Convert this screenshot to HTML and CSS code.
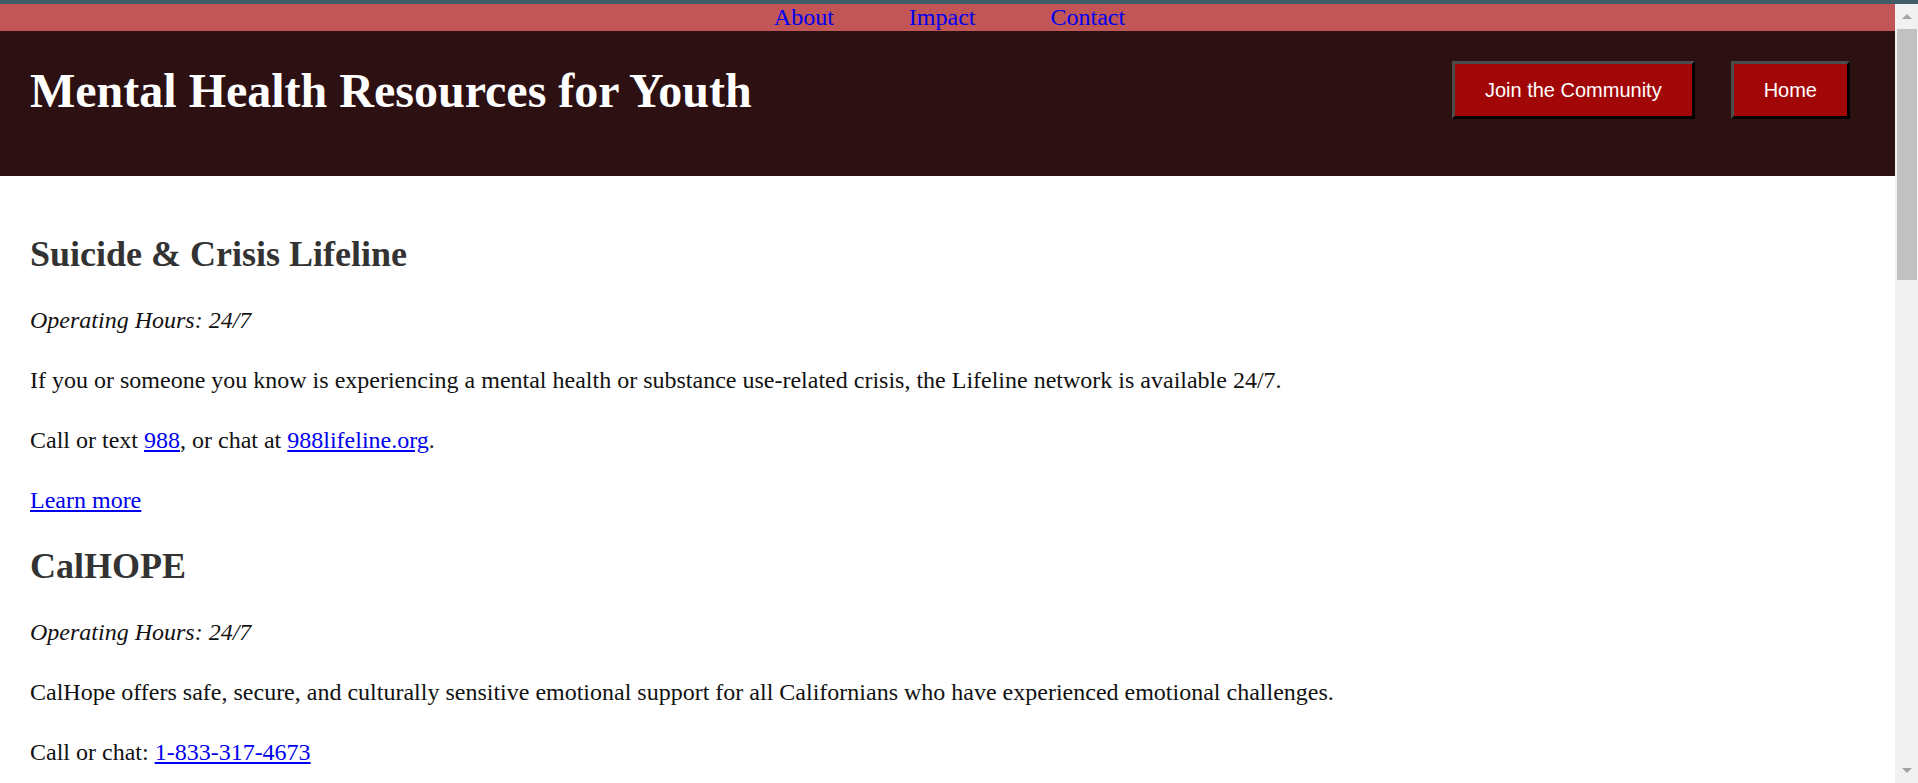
FILE: index.html
```html
<!DOCTYPE html>
<html lang="en">
<head>
<meta charset="utf-8">
<title>Mental Health Resources for Youth</title>
<link rel="stylesheet" href="styles.css">
</head>
<body>
<div class="topline"></div>
<div class="viewport">
  <div class="page">
    <nav class="topnav">
      <a href="#">About</a>
      <a href="#">Impact</a>
      <a href="#">Contact</a>
    </nav>
    <header class="masthead">
      <h1 class="site-title">Mental Health Resources for Youth</h1>
      <div class="actions">
        <button class="btn" type="button">Join the Community</button>
        <button class="btn" type="button">Home</button>
      </div>
    </header>
    <main class="content">
      <section class="resource">
        <h2>Suicide &amp; Crisis Lifeline</h2>
        <p><em>Operating Hours: 24/7</em></p>
        <p>If you or someone you know is experiencing a mental health or substance use-related crisis, the Lifeline network is available 24/7.</p>
        <p>Call or text <a href="#">988</a>, or chat at <a href="#">988lifeline.org</a>.</p>
        <p><a href="#">Learn more</a></p>
      </section>
      <section class="resource">
        <h2>CalHOPE</h2>
        <p><em>Operating Hours: 24/7</em></p>
        <p>CalHope offers safe, secure, and culturally sensitive emotional support for all Californians who have experienced emotional challenges.</p>
        <p>Call or chat: <a href="#">1-833-317-4673</a></p>
      </section>
    </main>
  </div>
  <div class="scrollbar" aria-hidden="true">
    <span class="sb-btn sb-up"></span>
    <span class="sb-thumb"></span>
    <span class="sb-track"></span>
    <span class="sb-btn sb-down"></span>
  </div>
</div>
</body>
</html>
```

FILE: styles.css
```css
html, body {
  margin: 0;
  padding: 0;
  height: 100%;
  overflow: hidden;
}

body {
  font-family: "Liberation Serif", "Times New Roman", serif;
  font-size: 24px;
  line-height: 36px;
  color: #111;
  background: #fff;
  display: flex;
  flex-direction: column;
}

.topline {
  flex: 0 0 4px;
  background: #3f5c67;
}

.viewport {
  flex: 1 1 auto;
  min-height: 0;
  display: flex;
}

.page {
  flex: 1 1 auto;
  min-width: 0;
  overflow: hidden;
}

/* decorative scrollbar column */
.scrollbar {
  flex: 0 0 23px;
  background: #f1f1f1;
  display: flex;
  flex-direction: column;
}

.sb-btn {
  flex: 0 0 25px;
  display: flex;
  justify-content: center;
  align-items: center;
  padding-left: 1px;
}

.sb-btn::before {
  content: "";
  width: 0;
  height: 0;
  border-left: 5px solid transparent;
  border-right: 5px solid transparent;
}

.sb-up::before {
  border-bottom: 5px solid #a3a3a3;
}

.sb-down::before {
  border-top: 5px solid #a3a3a3;
}

.sb-thumb {
  flex: 0 0 251px;
  margin: 0 1px 0 2px;
  background: #c1c1c1;
}

.sb-track {
  flex: 1 1 auto;
}

.topnav {
  background: #c25656;
  display: flex;
  justify-content: center;
  gap: 75px;
  padding-left: 4px;
  line-height: 27px;
  height: 27px;
}

.topnav a {
  color: #0000f0;
  text-decoration: none;
}

.masthead {
  background: #2c1012;
  display: flex;
  justify-content: space-between;
  align-items: center;
  padding: 30px 45px 57px 30px;
}

.site-title {
  margin: 0;
  font-size: 48px;
  line-height: 55px;
  font-weight: bold;
  color: #fff;
}

.actions {
  display: flex;
  gap: 36px;
}

.btn {
  font-family: "Liberation Sans", Arial, sans-serif;
  font-size: 20px;
  line-height: 22px;
  color: #fff;
  background: #a20707;
  border: 3px solid;
  border-color: #4b4b4b #000 #000 #4b4b4b;
  padding: 15px 30px;
  margin: 0;
  cursor: pointer;
}

.content {
  padding: 30px;
}

.resource h2 {
  font-size: 36px;
  line-height: 36px;
  margin: 30px 0;
  color: #333;
}

.resource p {
  margin: 24px 0;
}

.resource a {
  color: #0000ee;
}
```
